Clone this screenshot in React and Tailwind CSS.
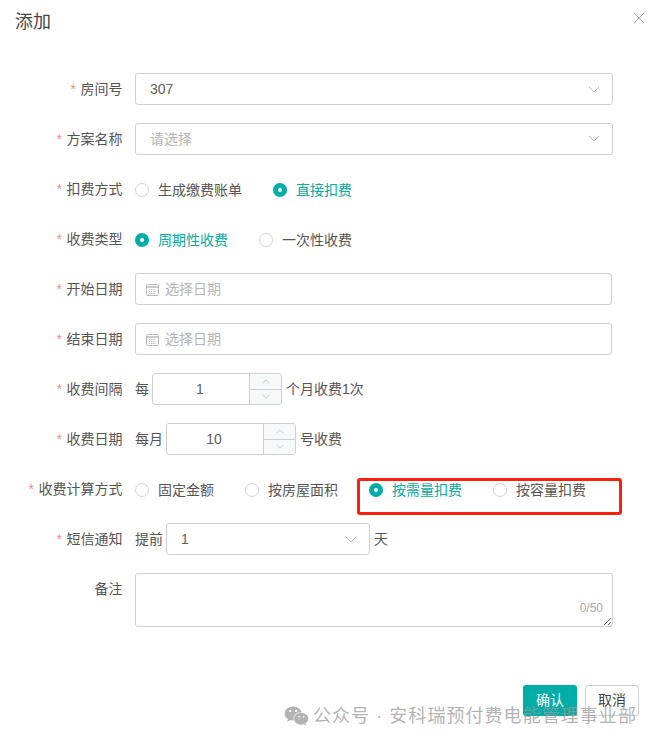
import React from "react";
import { FaWeixin } from "react-icons/fa";

const font = { fontFamily: '"Liberation Sans", "Noto Sans CJK SC", sans-serif' };

function Chevron({ up = false, className = "" }) {
  return (
    <svg viewBox="0 0 12 7" className={className} fill="none" stroke="currentColor" strokeWidth="1">
      <path d={up ? "M1 6 L6 1 L11 6" : "M1 1 L6 6 L11 1"} />
    </svg>
  );
}

function Row({ label, required = true, children, tall = false }) {
  return (
    <div className={`flex mb-[18px] ${tall ? "h-[54px]" : "h-8"}`}>
      <div className="w-[123px] shrink-0 h-8 flex items-center justify-end text-[14px] text-[#555]">
        {required && <span className="text-[#f78989] mr-[5px] text-[14px] leading-none">*</span>}
        <span className="-translate-x-[0.5px]">{label}</span>
      </div>
      <div className="ml-3 flex-1 flex items-center text-[14px] text-[#555]">{children}</div>
    </div>
  );
}

function Select({ value, placeholder, className = "w-[478px]", chevronClass = "" }) {
  return (
    <div className={`h-8 border border-[#cfcfcf] rounded-[3px] bg-white flex items-center justify-between pl-[14px] pr-[12px] ${className}`}>
      <span className={value ? "text-[#606060]" : "text-[#b5b5b5]"}>{value || placeholder}</span>
      <Chevron className={`w-3 h-[7px] text-[#bdbdbd] ${chevronClass}`} />
    </div>
  );
}

function Radio({ label, checked = false, last = false }) {
  return (
    <div className={`flex items-center mt-[2px] ${last ? "" : "mr-[31px]"}`}>
      {checked ? (
        <span className="w-[14px] h-[14px] rounded-full bg-[#00ada7] flex items-center justify-center">
          <span className="w-1 h-1 rounded-full bg-white" />
        </span>
      ) : (
        <span className="w-[14px] h-[14px] rounded-full border border-[#d4d4d4] bg-white" />
      )}
      <span className={`ml-[9px] ${checked ? "text-[#00ada7]" : "text-[#555]"}`}>{label}</span>
    </div>
  );
}

function DateInput() {
  return (
    <div className="w-[477px] h-8 border border-[#cfcfcf] rounded-[3px] bg-white flex items-center pl-[10px]">
      <svg viewBox="0 0 13 13" className="w-[13px] h-[13px] text-[#b8b8b8]" fill="none" stroke="currentColor" strokeWidth="1">
        <rect x="0.5" y="1.5" width="12" height="11" rx="1" />
        <path d="M0.5 4 H12.5" strokeWidth="1.5" />
        <path d="M3 6.5 H10 M3 8.5 H10 M3 10.5 H10" strokeDasharray="1.2 0.6" />
      </svg>
      <span className="ml-[6px] text-[#b5b5b5]">选择日期</span>
    </div>
  );
}

function NumberInput({ value }) {
  return (
    <div className="w-[130px] h-8 border border-[#cfcfcf] rounded-[3px] bg-white flex overflow-hidden">
      <div className="flex-1 flex items-center justify-center text-[#606060] -translate-x-px">{value}</div>
      <div className="w-8 border-l border-[#cfcfcf] bg-[#f5f9f9] flex flex-col">
        <div className="flex-1 flex items-center justify-center border-b border-[#cfcfcf]">
          <Chevron up className="w-2 h-[5px] text-[#b5b5b5]" />
        </div>
        <div className="flex-1 flex items-center justify-center">
          <Chevron className="w-2 h-[5px] text-[#b5b5b5]" />
        </div>
      </div>
    </div>
  );
}

export default function App() {
  return (
    <div className="relative w-[657px] h-[742px] bg-white overflow-hidden flex flex-col" style={font}>
      <div className="h-[73px] shrink-0 relative">
        <div className="pl-[15px] pt-[9px] text-[18px] leading-[26px] text-[#444]">添加</div>
        <svg viewBox="0 0 10 10" className="absolute left-[634px] top-[13px] w-[10px] h-[10px] text-[#a8a8a8]" fill="none" stroke="currentColor" strokeWidth="0.9">
          <path d="M0 0 L10 10 M10 0 L0 10" />
        </svg>
      </div>

      <div>
        <Row label="房间号"><Select value="307" /></Row>
        <Row label="方案名称"><Select placeholder="请选择" chevronClass="-translate-y-[1px]" /></Row>
        <Row label="扣费方式">
          <Radio label="生成缴费账单" />
          <Radio label="直接扣费" checked last />
        </Row>
        <Row label="收费类型">
          <Radio label="周期性收费" checked />
          <Radio label="一次性收费" last />
        </Row>
        <Row label="开始日期"><DateInput /></Row>
        <Row label="结束日期"><DateInput /></Row>
        <Row label="收费间隔">
          <span className="mr-[3px]">每</span>
          <NumberInput value="1" />
          <span className="ml-[5px] -translate-x-px">个月收费1次</span>
        </Row>
        <Row label="收费日期">
          <span className="mr-[3px]">每月</span>
          <NumberInput value="10" />
          <span className="ml-[4px]">号收费</span>
        </Row>
        <Row label="收费计算方式">
          <Radio label="固定金额" />
          <Radio label="按房屋面积" />
          <Radio label="按需量扣费" checked />
          <Radio label="按容量扣费" last />
        </Row>
        <Row label="短信通知">
          <span className="mr-[3px]">提前</span>
          <Select value="1" className="w-[204px]" />
          <span className="ml-[4px]">天</span>
        </Row>
        <Row label="备注" required={false} tall>
          <div className="relative w-[478px] h-[54px]">
            <textarea
              readOnly
              className="block w-full h-full border border-[#cfcfcf] rounded-[3px] bg-white outline-none"
            />
            <span className="absolute right-[10px] bottom-[11px] text-[12px] leading-4 text-[#a8a8a8]">0/50</span>
          </div>
        </Row>
      </div>

      <div className="flex justify-end gap-2 pr-[18px] mt-[40px]">
        <button className="w-[54px] h-[31px] bg-[#00ada7] rounded-[3px] text-white text-[14px]">确认</button>
        <button className="w-[54px] h-[31px] bg-white border border-[#cfcfcf] rounded-[3px] text-[#444] text-[14px]">取消</button>
      </div>

      {/* red annotation over the form */}
      <div className="absolute left-[357px] top-[478px] w-[265px] h-[37px] border-[3px] border-[#ff1f10] rounded-[3px] pointer-events-none" />

      {/* watermark over the footer */}
      <div className="absolute left-[284px] top-[703px] h-[26px] flex items-center pointer-events-none text-[#999]/75">
        <FaWeixin className="w-[25px] h-[22px]" />
        <span className="ml-[4px] text-[18px] tracking-[1.05px] whitespace-nowrap">公众号 · 安科瑞预付费电能管理事业部</span>
      </div>
    </div>
  );
}
